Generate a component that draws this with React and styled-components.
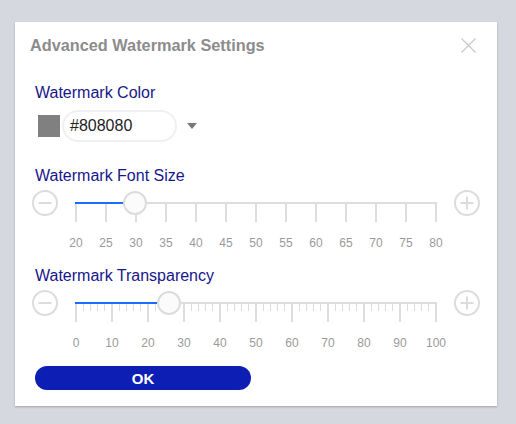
import React from 'react';
import styled, { createGlobalStyle } from 'styled-components';

const GlobalStyle = createGlobalStyle`
  html, body {
    margin: 0;
    padding: 0;
    background: #d5d8df;
    font-family: "Liberation Sans", Arial, sans-serif;
  }
  * { box-sizing: border-box; }
`;

const Page = styled.div`
  padding: 22px 0 0 15px;
  width: 516px;
  height: 424px;
`;

const Dialog = styled.div`
  width: 482px;
  background: #fff;
  box-shadow: 0 1px 2px rgba(0, 0, 0, 0.25);
  padding-bottom: 16px;
`;

const Header = styled.div`
  display: flex;
  align-items: center;
  justify-content: space-between;
  padding: 13px 21px 0 15px;
`;

const Title = styled.h2`
  margin: 0;
  font-size: 16.3px;
  line-height: 20px;
  font-weight: bold;
  color: #8c8c8c;
`;

const Close = styled.button`
  width: 15px;
  height: 15px;
  padding: 0;
  border: 0;
  background: none;
  display: flex;
`;

const Body = styled.div`
  padding: 0 17px 0 20px;
`;

const Label = styled.div`
  margin-top: ${(p) => p.$top}px;
  font-size: 16px;
  line-height: 20px;
  color: #17178a;
`;

const ColorRow = styled.div`
  display: flex;
  align-items: center;
  margin: 7px 0 0 3px;
`;

const Swatch = styled.div`
  width: 22px;
  height: 22px;
  background: ${(p) => p.$color};
`;

const HexInput = styled.div`
  width: 115px;
  height: 32px;
  margin-left: 2px;
  border: 2px solid #f0f0f0;
  border-radius: 16px;
  padding-left: 6px;
  display: flex;
  align-items: center;
  font-size: 16px;
  color: #1e1e1e;
`;

const Caret = styled.div`
  margin-left: 10px;
  width: 0;
  height: 0;
  border-left: 5px solid transparent;
  border-right: 5px solid transparent;
  border-top: 6px solid #777;
`;

const SliderRow = styled.div`
  display: flex;
  align-items: flex-start;
  gap: 17px;
  margin: 4px 0 0 -3px;
`;

const StepButton = styled.button`
  width: 26px;
  height: 26px;
  padding: 0;
  border: 0;
  background: none;
  display: flex;
  flex-shrink: 0;
`;

const TrackColumn = styled.div`
  width: 362px;
  padding-top: 12px;
`;

const Track = styled.div`
  position: relative;
  height: 20px;
`;

const Rail = styled.div`
  height: 2px;
  background: #dddddd;
`;

const Fill = styled.div`
  position: absolute;
  left: 0;
  top: 0;
  height: 2px;
  background: #1a6dff;
`;

const Ticks = styled.div`
  display: flex;
  justify-content: space-between;
  align-items: flex-start;
`;

const Tick = styled.div`
  width: ${(p) => (p.$major ? 2 : 1)}px;
  height: ${(p) => (p.$major ? 18 : 7)}px;
  background: #dddddd;
`;

const Handle = styled.div`
  position: absolute;
  top: 1px;
  width: 24px;
  height: 24px;
  border-radius: 50%;
  border: 2px solid #dcdcdc;
  background: #fbfbfb;
  transform: translate(-50%, -50%);
`;

const Scale = styled.div`
  display: flex;
  justify-content: space-between;
  padding: 0 1px;
  margin-top: 14px;
`;

const ScaleCell = styled.div`
  width: 0;
  display: flex;
  justify-content: center;
  font-size: 12px;
  line-height: 14px;
  color: #9a9a9a;
  white-space: nowrap;
`;

const OkButton = styled.button`
  display: block;
  margin-top: 16px;
  width: 216px;
  height: 24px;
  border: 0;
  border-radius: 12px;
  background: #0d1eb5;
  color: #fff;
  font-family: "Liberation Sans", Arial, sans-serif;
  font-size: 15px;
  font-weight: bold;
  padding: 0;
`;

const CircleIcon = ({ plus }) => (
  <svg width="26" height="26" viewBox="0 0 26 26">
    <circle cx="13" cy="13" r="12" fill="none" stroke="#dcdcdc" strokeWidth="2" />
    <line x1="6.5" y1="13" x2="19.5" y2="13" stroke="#dcdcdc" strokeWidth="2" />
    {plus && <line x1="13" y1="6.5" x2="13" y2="19.5" stroke="#dcdcdc" strokeWidth="2" />}
  </svg>
);

const range = (min, max, step) => {
  const out = [];
  for (let v = min; v <= max; v += step) out.push(v);
  return out;
};

const Slider = ({ min, max, value, major, minor }) => {
  const pct = ((value - min) / (max - min)) * 100;
  return (
    <SliderRow>
      <StepButton aria-label="decrease">
        <CircleIcon />
      </StepButton>
      <TrackColumn>
        <Track>
          <Rail />
          <Fill style={{ width: `${pct}%` }} />
          <Ticks>
            {range(min, max, minor).map((v) => (
              <Tick key={v} $major={(v - min) % major === 0} />
            ))}
          </Ticks>
          <Handle style={{ left: `${pct}%` }} />
        </Track>
        <Scale>
          {range(min, max, major).map((v) => (
            <ScaleCell key={v}>{v}</ScaleCell>
          ))}
        </Scale>
      </TrackColumn>
      <StepButton aria-label="increase">
        <CircleIcon plus />
      </StepButton>
    </SliderRow>
  );
};

export default function App() {
  return (
    <Page>
      <GlobalStyle />
      <Dialog>
        <Header>
          <Title>Advanced Watermark Settings</Title>
          <Close aria-label="close">
            <svg width="15" height="15" viewBox="0 0 15 15">
              <path d="M0.5 0.5 L14.5 14.5 M14.5 0.5 L0.5 14.5" stroke="#c8c8c8" strokeWidth="1.2" />
            </svg>
          </Close>
        </Header>
        <Body>
          <Label $top={28}>Watermark Color</Label>
          <ColorRow>
            <Swatch $color="#808080" />
            <HexInput>#808080</HexInput>
            <Caret />
          </ColorRow>
          <Label $top={24}>Watermark Font Size</Label>
          <Slider min={20} max={80} value={30} major={5} minor={5} />
          <Label $top={16}>Watermark Transparency</Label>
          <Slider min={0} max={100} value={26} major={10} minor={2} />
          <OkButton>OK</OkButton>
        </Body>
      </Dialog>
    </Page>
  );
}
